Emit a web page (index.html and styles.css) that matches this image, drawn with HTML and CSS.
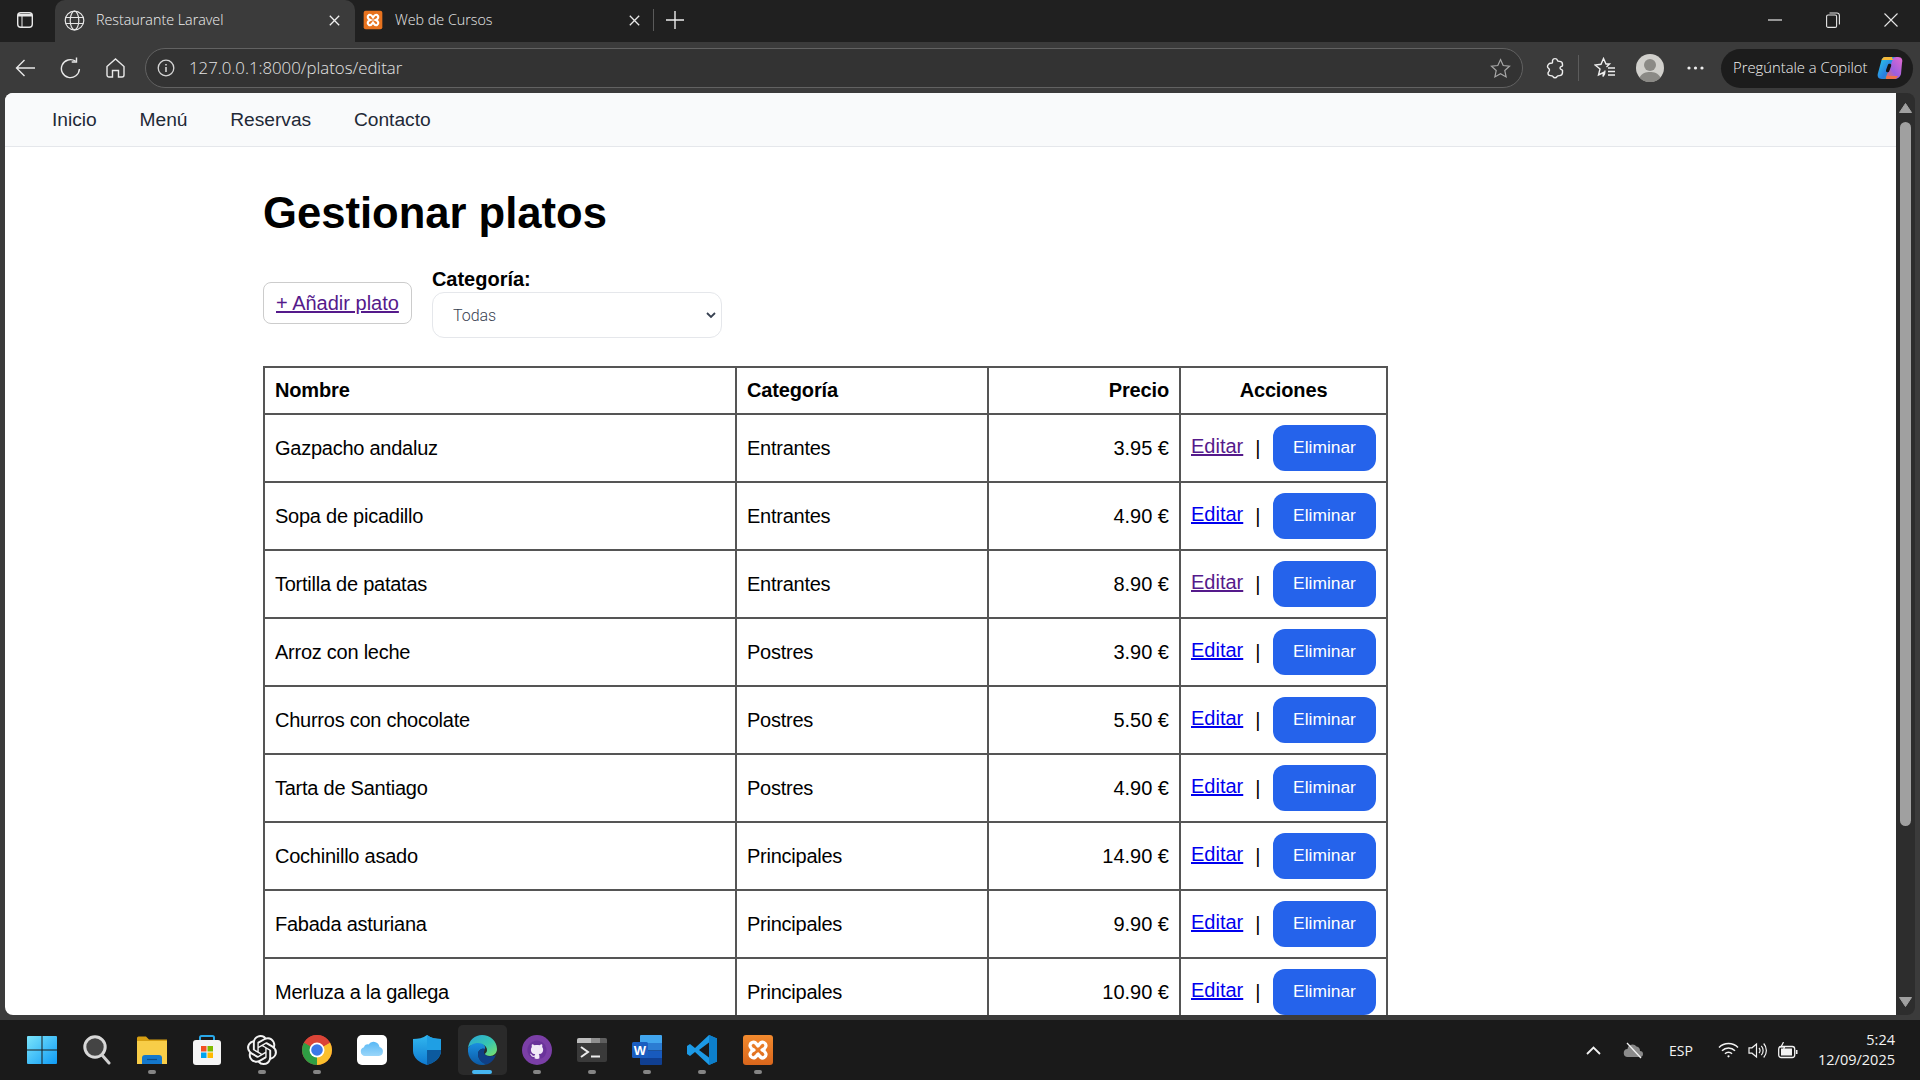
FILE: index.html
```html
<!DOCTYPE html>
<html lang="es">
<head>
<meta charset="utf-8">
<title>Restaurante Laravel</title>
<link rel="stylesheet" href="styles.css">
</head>
<body>
<div class="tabbar">
  <div class="tab-sidebtn"><svg width="18" height="18" viewBox="0 0 18 18" fill="none" stroke="#e8e8e8" stroke-width="1.4"><rect x="1.7" y="1.7" width="14.6" height="14.6" rx="3"/><path d="M2 3h14v2.500H2z" fill="#e8e8e8" stroke="none"/><path d="M6 5v11" stroke-width="1"/></svg></div>
  <div class="tab tab-active">
    <svg class="fav" width="21" height="21" viewBox="0 0 21 21" fill="none" stroke="#e6e6e6" stroke-width="1.2"><circle cx="10.5" cy="10.5" r="9.3"/><ellipse cx="10.5" cy="10.5" rx="4.3" ry="9.3"/><path d="M1.6 7.5h17.8M1.6 13.5h17.8"/></svg>
    <span class="tab-title">Restaurante Laravel</span>
    <svg class="tab-x" width="11" height="11" viewBox="0 0 11 11" stroke="#f0f0f0" stroke-width="1.3"><path d="M.8.8l9.4 9.4M10.2.8L.8 10.2"/></svg>
  </div>
  <div class="tab">
    <svg class="fav fav-x" width="20" height="22" viewBox="0 0 30 30"><rect x="1" y="1" width="28" height="28" rx="3" fill="#e8731f"/><path d="M9 7.500c2.500-1.500 4 .5 6 3.500 2-3 3.500-5 6-3.500 3.500 2 2 6-2 7.500 4 1.500 5.500 5.500 2 7.500-2.500 1.500-4-.5-6-3.500-2 3-3.500 5-6 3.500-3.500-2-2-6 2-7.500-4-1.500-5.500-5.500-2-7.500z" fill="none" stroke="#fff" stroke-width="3.200"/></svg>
    <span class="tab-title">Web de Cursos</span>
    <svg class="tab-x" width="11" height="11" viewBox="0 0 11 11" stroke="#e8e8e8" stroke-width="1.3"><path d="M.8.8l9.4 9.4M10.2.8L.8 10.2"/></svg>
  </div>
  <div class="tab-sep"></div>
  <svg class="tab-plus" width="18" height="18" viewBox="0 0 18 18" stroke="#ececec" stroke-width="1.4"><path d="M9 0v18M0 9h18"/></svg>
  <div class="winctl">
    <div class="winbtn"><svg width="14" height="2" viewBox="0 0 14 2"><path d="M0 1h14" stroke="#e6e6e6" stroke-width="1.2"/></svg></div>
    <div class="winbtn"><svg width="14" height="16" viewBox="0 0 14 16" fill="none" stroke="#e6e6e6" stroke-width="1.1"><rect x=".6" y="3" width="10" height="12.4" rx="1.5"/><path d="M3.5 1h7.5A2.4 2.4 0 0 1 13.4 3.4v9"/></svg></div>
    <div class="winbtn"><svg width="14" height="14" viewBox="0 0 14 14" stroke="#e6e6e6" stroke-width="1.1"><path d="M.5.5l13 13M13.5.5l-13 13"/></svg></div>
  </div>
</div>

<div class="toolbar">
  <div class="tbtn"><svg width="21" height="18" viewBox="0 0 21 18" fill="none" stroke="#e8e8e8" stroke-width="1.4"><path d="M20 9H1.5M9.5 1L1.5 9l8 8"/></svg></div>
  <div class="tbtn"><svg width="21" height="22" viewBox="0 0 21 22" fill="none" stroke="#e8e8e8" stroke-width="1.4"><path d="M15.5 4.2A9 9 0 1 0 19.4 12"/><path d="M16.5 0.5v4.5h-4.8"/></svg></div>
  <div class="tbtn"><svg width="19" height="20" viewBox="0 0 19 20" fill="none" stroke="#e8e8e8" stroke-width="1.4"><path d="M1 8.5L9.5 1 18 8.5V17a2 2 0 0 1-2 2h-3.5v-6.5h-6V19H3a2 2 0 0 1-2-2z"/></svg></div>
  <div class="urlbar">
    <svg width="18" height="18" viewBox="0 0 18 18" fill="none" stroke="#d5d5d5" stroke-width="1.3"><circle cx="9" cy="9" r="7.8"/><path d="M9 8v5" stroke-width="1.6"/><path d="M9 5v1.6" stroke-width="1.6"/></svg>
    <span class="url-text">127.0.0.1:8000/platos/editar</span>
    <svg class="url-star" width="21" height="21" viewBox="0 0 21 21" fill="none" stroke="#a8a8a8" stroke-width="1.2"><path d="M10.5 1.6l2.7 5.9 6.3.7-4.7 4.3 1.3 6.4-5.6-3.2-5.6 3.2 1.3-6.4-4.7-4.3 6.3-.7z"/></svg>
  </div>
  <div class="tbtn tbtn-ext"><svg width="20" height="22" viewBox="0 0 20 22" fill="none" stroke="#eee" stroke-width="1.4"><path d="M7.5 3.5a2.600 2.600 0 0 1 5 0c0 .6 0 .9 2 .9 2 0 3 1 3 3v1.300c-.4 1-2.500.6-2.500 2.300s2.100 1.300 2.500 2.300v2.300c0 2-1 3-3 3-2 0-2 .3-2.500 1a2.300 2.300 0 0 1-4 0c-.5-.7-.5-1-2.500-1-1.500 0-2.500-1-2.500-2.500s1.500-1.300 1.500-3-2-1.800-2-3.400c0-1.600 1.500-3.400 3-3.400 1.500 0 2-.2 2-.8z"/></svg></div>
  <div class="tb-sep"></div>
  <div class="tbtn tbtn-fav"><svg width="22" height="22" viewBox="0 0 22 22" fill="none" stroke="#eee" stroke-width="1.4"><path d="M11 13.500l-.5 3.500-1.500 2.500 .5-4-5 2.500 1.500-6L1 8l6-.7L9.500 1.500l2.500 5.500h3.500l-3 3"/><path d="M14 11h7M14 14.500h7M14 18h7" stroke-width="1.500"/></svg></div>
  <div class="tbtn tbtn-avatar"><svg width="28" height="28" viewBox="0 0 28 28"><circle cx="14" cy="14" r="14" fill="#d1d0cc"/><circle cx="14" cy="11" r="6" fill="#8b8a86"/><path d="M3.500 23.500C6 19 10 18 14 18s8 1 10.500 5.500A14 14 0 0 1 3.500 23.500z" fill="#8b8a86"/></svg></div>
  <div class="tbtn tbtn-dots"><svg width="17" height="4" viewBox="0 0 17 4" fill="#eee"><circle cx="2" cy="2" r="1.600"/><circle cx="8.500" cy="2" r="1.600"/><circle cx="15" cy="2" r="1.600"/></svg></div>
  <div class="copilot">
    <span class="copilot-text">Pregúntale a Copilot</span>
    <svg width="28" height="28" viewBox="0 0 28 28">
      <defs>
        <linearGradient id="cp1" x1="0" y1="0" x2="1" y2="1"><stop offset="0" stop-color="#2bd4e8"/><stop offset=".6" stop-color="#2a7de1"/><stop offset="1" stop-color="#35b26b"/></linearGradient>
        <linearGradient id="cp2" x1="1" y1="0" x2="0" y2="1"><stop offset="0" stop-color="#e56ad0"/><stop offset=".6" stop-color="#9b5fe0"/><stop offset="1" stop-color="#f0734a"/></linearGradient>
      </defs>
      <path d="M9 3h9c1.500 0 1.500 1 1 2l-7 18c-.5 1-1 2-3 2H6c-4 0-5-3-4-6l3-11c.6-3 2-5 4-5z" fill="url(#cp1)"/>
      <path d="M19 25h-8c-1.500 0-1.500-1-1-2l7-18c.5-1 1-2 3-2h2c4 0 5 3 4 6l-1 11c-.6 3-4 5-6 5z" fill="url(#cp2)"/>
      <path d="M10 25h8c1.500 0 3-1 4-3H11z" fill="#f0734a"/>
      <path d="M16 3H9C7 3 6 5 5.500 6H17z" fill="#f5b93a"/>
      <path d="M13.500 11.500l-1.800 5" stroke="#141414" stroke-width="3.500" stroke-linecap="round"/>
    </svg>
  </div>
</div>

<div class="viewport">
  <div class="page">
    <nav class="nav">
      <a class="nav-link">Inicio</a>
      <a class="nav-link">Menú</a>
      <a class="nav-link">Reservas</a>
      <a class="nav-link">Contacto</a>
    </nav>
    <main class="content">
      <h1 class="title">Gestionar platos</h1>
      <div class="controls">
        <div class="add-btn"><a class="link visited">+ Añadir plato</a></div>
        <div class="filter">
          <label class="filter-label">Categoría:</label>
          <select class="filter-select"><option>Todas</option></select>
        </div>
      </div>
      <table class="dishes">
        <thead>
          <tr><th class="c-name">Nombre</th><th class="c-cat">Categoría</th><th class="c-price">Precio</th><th class="c-act">Acciones</th></tr>
        </thead>
        <tbody>
          <tr><td>Gazpacho andaluz</td><td>Entrantes</td><td class="num">3.95 €</td><td><div class="acts"><a class="link visited">Editar</a><span>|</span><button class="del">Eliminar</button></div></td></tr>
          <tr><td>Sopa de picadillo</td><td>Entrantes</td><td class="num">4.90 €</td><td><div class="acts"><a class="link">Editar</a><span>|</span><button class="del">Eliminar</button></div></td></tr>
          <tr><td>Tortilla de patatas</td><td>Entrantes</td><td class="num">8.90 €</td><td><div class="acts"><a class="link visited">Editar</a><span>|</span><button class="del">Eliminar</button></div></td></tr>
          <tr><td>Arroz con leche</td><td>Postres</td><td class="num">3.90 €</td><td><div class="acts"><a class="link">Editar</a><span>|</span><button class="del">Eliminar</button></div></td></tr>
          <tr><td>Churros con chocolate</td><td>Postres</td><td class="num">5.50 €</td><td><div class="acts"><a class="link">Editar</a><span>|</span><button class="del">Eliminar</button></div></td></tr>
          <tr><td>Tarta de Santiago</td><td>Postres</td><td class="num">4.90 €</td><td><div class="acts"><a class="link">Editar</a><span>|</span><button class="del">Eliminar</button></div></td></tr>
          <tr><td>Cochinillo asado</td><td>Principales</td><td class="num">14.90 €</td><td><div class="acts"><a class="link">Editar</a><span>|</span><button class="del">Eliminar</button></div></td></tr>
          <tr><td>Fabada asturiana</td><td>Principales</td><td class="num">9.90 €</td><td><div class="acts"><a class="link">Editar</a><span>|</span><button class="del">Eliminar</button></div></td></tr>
          <tr><td>Merluza a la gallega</td><td>Principales</td><td class="num">10.90 €</td><td><div class="acts"><a class="link">Editar</a><span>|</span><button class="del">Eliminar</button></div></td></tr>
        </tbody>
      </table>
    </main>
  </div>
  <div class="scrollbar">
    <svg width="13" height="10" viewBox="0 0 13 10"><path d="M6.500 .5L12.500 9.500H.5z" fill="#a0a0a0" stroke="#a0a0a0" stroke-linejoin="round"/></svg>
    <div class="thumb"></div>
    <svg class="arrow-down" width="13" height="10" viewBox="0 0 13 10"><path d="M6.500 9.500L12.500 .5H.5z" fill="#a0a0a0" stroke="#a0a0a0" stroke-linejoin="round"/></svg>
  </div>
</div>

<div class="taskbar">
  <div class="tb-apps">
    <div class="app"><svg width="30" height="30" viewBox="0 0 30 30"><defs><linearGradient id="w1" x1="0" y1="0" x2="1" y2="1"><stop offset="0" stop-color="#7be5fb"/><stop offset="1" stop-color="#0f9bf5"/></linearGradient></defs><path d="M1 1h13.500v13.500H0V2a1 1 0 0 1 1-1zM15.500 1H29a1 1 0 0 1 1 1v12.500H15.500zM0 15.500h14.500V29H1a1 1 0 0 1-1-1zM15.500 15.500H30V28a1 1 0 0 1-1 1H15.500z" fill="url(#w1)"/></svg></div>
    <div class="app"><svg width="28" height="30" viewBox="0 0 28 30"><circle cx="12" cy="12" r="10.200" fill="#444" stroke="#d8d8d8" stroke-width="3"/><path d="M19 20l7 8" stroke="#d0d0d0" stroke-width="3" stroke-linecap="round"/></svg></div>
    <div class="app on"><svg width="30" height="30" viewBox="0 0 30 30"><path d="M0 3a1.500 1.500 0 0 1 1.500-1.500H9l3 3h18V7H0z" fill="#d79f12"/><path d="M0 6h30v23H0z" fill="#f8cd48"/><path d="M5 23a3 3 0 0 1 3-3h14a3 3 0 0 1 3 3v6H5z" fill="#1478cc"/><path d="M10 24.500h10" stroke="#0b4d8a" stroke-width="1.200"/></svg></div>
    <div class="app"><svg width="30" height="32" viewBox="0 0 30 32"><path d="M8 7V3.500A1.500 1.500 0 0 1 9.500 2h11A1.500 1.500 0 0 1 22 3.500V7" fill="none" stroke="#2aa8e8" stroke-width="2"/><rect x="1" y="6" width="28" height="25" rx="3" fill="#f5f5f5"/><rect x="9" y="12" width="5.500" height="5.500" fill="#f25022"/><rect x="15.500" y="12" width="5.500" height="5.500" fill="#7fba00"/><rect x="9" y="18.500" width="5.500" height="5.500" fill="#00a4ef"/><rect x="15.500" y="18.500" width="5.500" height="5.500" fill="#ffb900"/></svg></div>
    <div class="app on"><svg width="30" height="30" viewBox="0 0 24 24"><path fill="#f2f2f2" d="M22.2819 9.8211a5.9847 5.9847 0 0 0-.5157-4.9108 6.0462 6.0462 0 0 0-6.5098-2.9A6.0651 6.0651 0 0 0 4.9807 4.1818a5.9847 5.9847 0 0 0-3.9977 2.9 6.0462 6.0462 0 0 0 .7427 7.0966 5.98 5.98 0 0 0 .511 4.9107 6.051 6.051 0 0 0 6.5146 2.9001A5.9847 5.9847 0 0 0 13.2599 24a6.0557 6.0557 0 0 0 5.7718-4.2058 5.9894 5.9894 0 0 0 3.9977-2.9001 6.0557 6.0557 0 0 0-.7475-7.0729zm-9.022 12.6081a4.4755 4.4755 0 0 1-2.8764-1.0408l.1419-.0804 4.7783-2.7582a.7948.7948 0 0 0 .3927-.6813v-6.7369l2.02 1.1686a.071.071 0 0 1 .038.052v5.5826a4.504 4.504 0 0 1-4.4945 4.4944zm-9.6607-4.1254a4.4708 4.4708 0 0 1-.5346-3.0137l.142.0852 4.783 2.7582a.7712.7712 0 0 0 .7806 0l5.8428-3.3685v2.3324a.0804.0804 0 0 1-.0332.0615L9.74 19.9502a4.4992 4.4992 0 0 1-6.1408-1.6464zM2.3408 7.8956a4.485 4.485 0 0 1 2.3655-1.9728V11.6a.7664.7664 0 0 0 .3879.6765l5.8144 3.3543-2.0201 1.1685a.0757.0757 0 0 1-.071 0l-4.8303-2.7865A4.504 4.504 0 0 1 2.3408 7.872zm16.5963 3.8558L13.1038 8.364 15.1192 7.2a.0757.0757 0 0 1 .071 0l4.8303 2.7913a4.4944 4.4944 0 0 1-.6765 8.1042v-5.6772a.79.79 0 0 0-.407-.667zm2.0107-3.0231l-.142-.0852-4.7735-2.7818a.7759.7759 0 0 0-.7854 0L9.409 9.2297V6.8974a.0662.0662 0 0 1 .0284-.0615l4.8303-2.7866a4.4992 4.4992 0 0 1 6.6802 4.66zM8.3065 12.863l-2.02-1.1638a.0804.0804 0 0 1-.038-.0567V6.0742a4.4992 4.4992 0 0 1 7.3757-3.4537l-.142.0805L8.704 5.459a.7948.7948 0 0 0-.3927.6813zm1.0976-2.3654l2.602-1.4998 2.6069 1.4998v2.9994l-2.5974 1.4997-2.6067-1.4997Z"/></svg></div>
    <div class="app on"><svg width="30" height="30" viewBox="0 0 30 30"><circle cx="15" cy="15" r="15" fill="#db4437"/><path d="M15 15L2.010 7.500A15 15 0 0 0 15 30z" fill="#2f9e44"/><path d="M15 15L15 30A15 15 0 0 0 27.990 7.500z" fill="#fbc02d"/><path d="M15 15L27.990 7.500A15 15 0 0 0 2.010 7.500z" fill="#db4437"/><circle cx="15" cy="15" r="7.500" fill="#fff"/><circle cx="15" cy="15" r="5.800" fill="#3b78e7"/></svg></div>
    <div class="app"><svg width="30" height="30" viewBox="0 0 30 30"><defs><linearGradient id="cl" x1="0" y1="0" x2="0" y2="1"><stop offset="0" stop-color="#58b8f5"/><stop offset="1" stop-color="#9ad6fa"/></linearGradient></defs><rect width="30" height="30" rx="5" fill="#fff"/><path d="M8 21a4.500 4.500 0 0 1-1-8.800 3.500 3.500 0 0 1 4.500-2.700A6 6 0 0 1 22.500 12 4.600 4.600 0 0 1 22 21z" fill="url(#cl)"/></svg></div>
    <div class="app"><svg width="28" height="30" viewBox="0 0 28 30"><defs><linearGradient id="sh" x1="0" y1="0" x2="0" y2="1"><stop offset="0" stop-color="#31b8f0"/><stop offset="1" stop-color="#0f7ad1"/></linearGradient></defs><path d="M14 0C10 3 5 4 0 4v12c0 7 7 12 14 14 7-2 14-7 14-14V4c-5 0-10-1-14-4z" fill="url(#sh)"/><path d="M14 15h14v1c0 7-7 12-14 14z" fill="#0c5a9e"/><path d="M14 0c4 3 9 4 14 4v11H14z" fill="#1f9fe4"/></svg></div>
    <div class="app active"><svg width="30" height="30" viewBox="0 0 30 30"><defs><linearGradient id="e1" x1="0" y1="0" x2="1" y2="1"><stop offset="0" stop-color="#2aa5d8"/><stop offset=".55" stop-color="#37c6b0"/><stop offset="1" stop-color="#7ee36a"/></linearGradient><linearGradient id="e2" x1="0" y1="0" x2="0" y2="1"><stop offset="0" stop-color="#1a8fe0"/><stop offset="1" stop-color="#0c59a4"/></linearGradient></defs><path d="M1 13C2 5 8 0 15 0c8 0 15 6 15 14 0 4-3 7-7 7-3 0-5-1-5-2 0-1 2-1 2-4 0-4-4-6-8-6-5 0-9 1-11 4z" fill="url(#e1)"/><path d="M1 13c3-4 7-5 10-5 5 0 8 3 7 6-3-1-7 1-7 5 0 5 4 9 9 10-1.500.5-3 1-5 1C7 30 0 23 1 13z" fill="url(#e2)"/><path d="M11 19c0-4 4-6 7-5 0 1-1 2-1 3 0 3 4 5 8 4 1.500 0 3-.5 4-1.500-1.500 5-5 8.500-9 10-5-1-9-5-9-10.500z" fill="#0f3f86"/></svg></div>
    <div class="app on"><svg width="30" height="30" viewBox="0 0 30 30"><circle cx="15" cy="15" r="15" fill="#7b3fa7"/><circle cx="15" cy="15" r="9" fill="#f1e9f7"/><g transform="translate(5.400 5.400) scale(1.200)"><path d="M8 0C3.580 0 0 3.580 0 8c0 3.540 2.290 6.530 5.470 7.590.4.070.55-.17.55-.38 0-.19-.01-.82-.01-1.490-2.010.37-2.530-.49-2.690-.94-.09-.23-.48-.94-.82-1.130-.28-.15-.68-.52-.01-.53.63-.01 1.080.58 1.230.82.720 1.210 1.870.87 2.330.66.070-.52.280-.87.510-1.070-1.780-.2-3.640-.89-3.640-3.950 0-.87.310-1.590.820-2.150-.08-.2-.36-1.020.080-2.120 0 0 .67-.21 2.200.82.640-.18 1.320-.27 2-.27s1.360.090 2 .27c1.530-1.040 2.200-.82 2.200-.82.440 1.100.160 1.920.080 2.120.510.560.820 1.270.820 2.150 0 3.070-1.870 3.750-3.650 3.950.290.250.540.730.540 1.480 0 1.070-.01 1.930-.01 2.200 0 .21.150.460.550.380A8.013 8.013 0 0016 8c0-4.420-3.580-8-8-8z" fill="#6a339a" fill-rule="evenodd"/></g></svg></div>
    <div class="app on"><svg width="30" height="24" viewBox="0 0 30 24"><rect width="30" height="24" rx="2" fill="#3a3a3a"/><path d="M0 2a2 2 0 0 1 2-2h12v5H0z" fill="#bdbdbd"/><path d="M14 0h9v5h-9z" fill="#8f8f8f"/><path d="M23 0h5a2 2 0 0 1 2 2v3h-7z" fill="#5f5f5f"/><path d="M4 9l7 5-7 5" fill="none" stroke="#ececec" stroke-width="2"/><path d="M14 18.500h9" stroke="#ececec" stroke-width="2"/></svg></div>
    <div class="app on"><svg width="30" height="30" viewBox="0 0 30 30"><path d="M8 1a1 1 0 0 1 1-1h20a1 1 0 0 1 1 1v7H8z" fill="#41a5ee"/><path d="M8 8h22v7.500H8z" fill="#2b7cd3"/><path d="M8 15.500h22V23H8z" fill="#185abd"/><path d="M8 23h22v6a1 1 0 0 1-1 1H9a1 1 0 0 1-1-1z" fill="#103f91"/><rect y="7" width="16" height="16" rx="1.500" fill="#1a5dc0"/><text x="8" y="19.500" class="word-w">W</text></svg></div>
    <div class="app on"><svg width="30" height="30" viewBox="0 0 30 30"><path d="M22 0L30 3.500v23L22 30 8 17l-5 4-3-2v-8l3-2 5 4z" fill="#1c9ae6"/><path d="M22 7.500L12 15l10 7.500z" fill="#1a1a1a"/><path d="M22 0L30 3.500v23L22 30z" fill="#0d7fcb"/></svg></div>
    <div class="app on"><svg width="30" height="30" viewBox="0 0 30 30"><defs><linearGradient id="xa" x1="0" y1="0" x2="0" y2="1"><stop offset="0" stop-color="#f28a2e"/><stop offset="1" stop-color="#d9661c"/></linearGradient></defs><rect width="30" height="30" rx="3" fill="url(#xa)"/><path d="M9 7.500c2.500-1.500 4 .5 6 3.500 2-3 3.500-5 6-3.500 3.500 2 2 6-2 7.500 4 1.500 5.500 5.500 2 7.500-2.500 1.500-4-.5-6-3.500-2 3-3.500 5-6 3.500-3.500-2-2-6 2-7.500-4-1.500-5.500-5.500-2-7.500z" fill="none" stroke="#fff" stroke-width="3.200" stroke-linejoin="round"/></svg></div>
  </div>
  <div class="tray">
    <div class="tray-i w40"><svg width="15" height="9" viewBox="0 0 15 9" fill="none" stroke="#f2f2f2" stroke-width="1.800"><path d="M1 8l6.500-6.500L14 8"/></svg></div>
    <div class="tray-i w40"><svg width="21" height="17" viewBox="0 0 21 17"><path d="M5 15a4 4 0 0 1-.5-8 5 5 0 0 1 9-2.500A4.500 4.500 0 0 1 17 9a3 3 0 0 1 0 6z" fill="#8b8b8b"/><path d="M4 1l14 15" stroke="#f2f2f2" stroke-width="1.300"/></svg></div>
    <div class="tray-lang">ESP</div>
    <div class="tray-i w30"><svg width="21" height="16" viewBox="0 0 21 16" fill="none" stroke="#f2f2f2" stroke-width="1.500"><path d="M1 5.500a13.500 13.500 0 0 1 19 0M4 8.800a9 9 0 0 1 13 0M7 11.800a4.700 4.700 0 0 1 7 0"/><circle cx="10.500" cy="14.300" r="1.100" fill="#f2f2f2" stroke="none"/></svg></div>
    <div class="tray-i w30"><svg width="20" height="17" viewBox="0 0 20 17" fill="none" stroke="#f2f2f2" stroke-width="1.200"><path d="M1 5.800h3L8.500 2v13L4 11.200H1z"/><path d="M11 6a3.500 3.500 0 0 1 0 5M13.300 3.800a7 7 0 0 1 0 9.400M15.700 1.500a10.500 10.500 0 0 1 0 14"/></svg></div>
    <div class="tray-i w30"><svg width="20" height="17" viewBox="0 0 20 17" fill="none" stroke="#f2f2f2" stroke-width="1.300"><rect x=".7" y="4.500" width="16" height="11" rx="2.500"/><path d="M3 6.500h11v7H3z" fill="#f2f2f2" stroke="none"/><path d="M18.700 8v4" stroke-width="1.600"/><path d="M5.500 0L3 5h3.500L5 9" stroke-width="1.200"/></svg></div>
    <div class="clock"><span>5:24</span><span>12/09/2025</span></div>
  </div>
</div>
</body>
</html>
```

FILE: styles.css
```css
* { box-sizing: border-box; }
html, body { margin: 0; height: 100%; }
body {
  width: 1920px;
  height: 1080px;
  overflow: hidden;
  display: flex;
  flex-direction: column;
  background: #3b3b3b;
  font-family: "Liberation Sans", Arial, sans-serif;
}

/* tab strip */
.tabbar {
  height: 42px;
  flex: none;
  display: flex;
  align-items: center;
  padding-bottom: 2px;
  background: #202020;
  color: #eaeaea;
  font-family: "Open Sans", sans-serif;
  font-size: 14.300px;
  font-weight: 300;
}
.tab-sidebtn { width: 55px; display: flex; justify-content: center; padding-right: 6px; }
.tab {
  width: 300px;
  height: 42px;
  display: flex;
  align-items: center;
  padding: 0 15px 2px 8px;
  margin-bottom: -2px;
}
.tab-active {
  background: #3b3b3b;
  border-radius: 10px 10px 0 0;
  padding-left: 9px;
}
.fav { flex: none; margin-right: 11px; }
.fav-x { margin-right: 12px; }
.tab-title { flex: 1; padding-bottom: 2px; white-space: nowrap; }
.tab-active .tab-title { color: #f0f0f0; }
.tab-x { flex: none; }
.tab-sep { width: 1px; height: 22px; background: #5a5a5a; margin-left: -2px; }
.tab-plus { margin-left: 12px; }
.winctl { margin-left: auto; display: flex; }
.winbtn { width: 58px; display: flex; align-items: center; justify-content: center; }

/* toolbar */
.toolbar {
  height: 51px;
  flex: none;
  display: flex;
  align-items: center;
  padding: 6px 7px 5px 3px;
  background: #3b3b3b;
}
.tbtn { width: 45px; height: 40px; flex: none; display: flex; align-items: center; justify-content: center; }
.tbtn-ext { width: 44px; margin-left: 10px; }
.tb-sep { width: 1px; height: 26px; background: #5c5c5c; margin: 0 1px; }
.tbtn-fav { width: 50px; }
.tbtn-avatar { width: 40px; }
.tbtn-dots { width: 50px; }
.urlbar {
  flex: 1;
  height: 40px;
  margin-left: 7px;
  display: flex;
  align-items: center;
  gap: 14px;
  padding: 0 11px 0 11px;
  background: #333;
  border: 1px solid #626262;
  border-radius: 20px;
}
.url-text {
  flex: 1;
  padding-bottom: 2px;
  color: #e4e4e4;
  font-family: "Open Sans", sans-serif;
  font-size: 16.800px;
  font-weight: 300;
  white-space: nowrap;
}
.copilot {
  width: 192px;
  height: 39px;
  margin-left: 1px;
  display: flex;
  align-items: center;
  justify-content: space-between;
  padding: 0 9px 0 12px;
  background: #1c1c1c;
  border-radius: 20px;
  color: #f2f2f2;
  font-family: "Open Sans", sans-serif;
  font-size: 14.800px;
  font-weight: 300;
  white-space: nowrap;
}
.copilot-text { padding-bottom: 2px; }

/* page area */
.viewport {
  height: 922px;
  flex: none;
  margin-left: 5px;
  display: flex;
}
.page {
  width: 1891px;
  background: #fff;
  border-radius: 8px 0 0 8px;
  overflow: hidden;
}
.nav {
  height: 54px;
  display: flex;
  align-items: center;
  gap: 42.700px;
  padding: 1px 0 0 47px;
  background: #f9fafb;
  border-bottom: 1px solid #e5e7eb;
}
.nav-link { color: #1f2937; font-size: 19.200px; }
.content { padding: 0 0 0 258px; color: #000; }
.title { margin: 0; padding-top: 41px; font-size: 43.600px; line-height: 50px; font-weight: 700; }
.controls { display: flex; align-items: center; gap: 20px; margin-top: 30px; }
.add-btn {
  height: 42px;
  padding: 0 12px;
  display: flex;
  align-items: center;
  background: #fff;
  border: 1px solid #ccc;
  border-radius: 8px;
  font-size: 20px;
}
.link { color: #0000ee; font-size: 20px; text-decoration: underline; }
.visited { color: #551a8b; }
.filter { display: flex; flex-direction: column; }
.filter-label { font-size: 20px; font-weight: 700; line-height: 22px; padding-bottom: 2px; }
.filter-select {
  appearance: none;
  width: 290px;
  height: 46px;
  padding: 0 16px 0 20px;
  background: #fff url("data:image/svg+xml,%3Csvg xmlns='http://www.w3.org/2000/svg' width='10' height='7' viewBox='0 0 10 7'%3E%3Cpath d='M1 1l4 4 4-4' fill='none' stroke='%23374151' stroke-width='1.800'/%3E%3C/svg%3E") no-repeat right 5px center;
  border: 1px solid #e5e7eb;
  border-radius: 12px;
  color: #374151;
  font-family: Roboto, sans-serif;
  font-size: 16px;
  font-weight: 300;
}

/* table */
.dishes {
  width: 1125px;
  margin-top: 28px;
  border-collapse: collapse;
  table-layout: fixed;
  font-size: 20px;
  letter-spacing: -.25px;
}
.dishes th, .dishes td { border: 2px solid #555; padding: 0 10px; }
.dishes th { height: 47px; text-align: left; font-weight: 700; letter-spacing: -.15px; }
.dishes td { height: 68px; }
.c-name { width: 472px; }
.c-cat { width: 252px; }
.dishes .c-price { width: 192px; text-align: right; }
.dishes .c-act { width: 207px; text-align: center; }
.dishes .num { text-align: right; letter-spacing: 0; }
.acts { display: flex; align-items: center; gap: 12px; letter-spacing: 0; }
.acts .link { position: relative; top: -2px; }
.del {
  width: 103px;
  height: 46px;
  margin-left: auto;
  padding: 0 0 2px;
  border: 0;
  border-radius: 12px;
  background: #2563eb;
  color: #fff;
  font-family: "Liberation Sans", Arial, sans-serif;
  font-size: 17.400px;
}

/* scrollbar */
.scrollbar {
  width: 19px;
  display: flex;
  flex-direction: column;
  align-items: center;
  padding: 10px 0 8px;
  background: #2d2d2d;
  border-radius: 0 8px 8px 0;
}
.thumb { width: 11px; height: 704px; margin-top: 9px; border-radius: 6px; background: #a0a0a0; }
.arrow-down { margin-top: auto; }

/* taskbar */
.taskbar {
  height: 60px;
  flex: none;
  margin-top: 5px;
  display: flex;
  align-items: center;
  padding-left: 14px;
  background: #1a1a1a;
  color: #f2f2f2;
  font-family: "Open Sans", sans-serif;
}
.tb-apps { display: flex; align-items: center; }
.app {
  position: relative;
  width: 55.080px;
  height: 60px;
  display: flex;
  align-items: center;
  justify-content: center;
}
.on::after {
  content: "";
  position: absolute;
  left: 23.500px;
  bottom: 6px;
  width: 8px;
  height: 4px;
  border-radius: 2px;
  background: #858585;
}
.active::before {
  content: "";
  position: absolute;
  left: 3px;
  top: 5px;
  width: 49px;
  height: 50px;
  border-radius: 5px;
  background: #2a2a2a;
}
.active::after {
  content: "";
  position: absolute;
  left: 17.500px;
  bottom: 6px;
  width: 20px;
  height: 4px;
  border-radius: 2px;
  background: #46b6f0;
}
.app svg { position: relative; }
.word-w { fill: #fff; font-family: "Liberation Sans", Arial, sans-serif; font-size: 13px; font-weight: 700; text-anchor: middle; }
.tray { margin-left: auto; display: flex; align-items: center; }
.tray-i { display: flex; align-items: center; justify-content: center; }
.w40 { width: 40px; }
.w30 { width: 30px; }
.tray-lang { width: 56px; margin-right: 4px; text-align: center; font-size: 14px; }
.clock {
  width: 117px;
  padding-right: 25px;
  display: flex;
  flex-direction: column;
  align-items: flex-end;
  font-size: 14.500px;
  line-height: 20px;
  white-space: nowrap;
}
```
